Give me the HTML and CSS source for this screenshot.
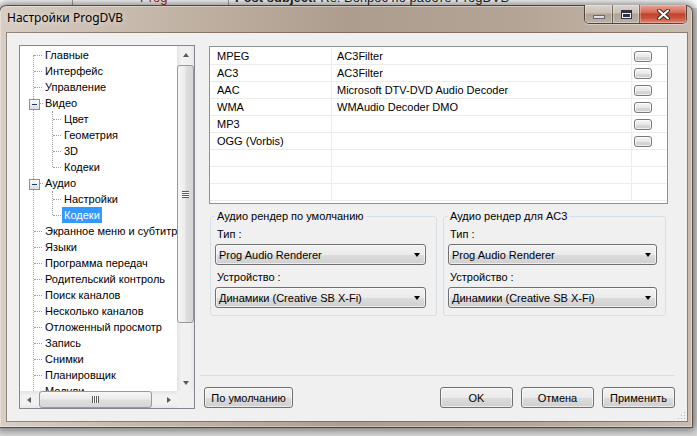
FILE: index.html
```html
<!DOCTYPE html>
<html lang="ru">
<head>
    <meta charset="UTF-8">
    <title>Настройки ProgDVB</title>
    <link rel="stylesheet" href="styles.css">
</head>
<body>
<div class="desk">
    <div class="page-strip">
        <span class="bg-prog">Prog</span>
        <span class="bg-subject"><b>Post subject:</b> Re: Вопрос по работе ProgDVB</span>
    </div>

    <div class="window">
        <div class="titlebar">
            <span class="title">Настройки ProgDVB</span>
            <div class="caption-btns">
                <span class="cap cap-min"><i></i></span>
                <span class="cap cap-max"><i></i></span>
                <span class="cap cap-close">
                    <svg width="13" height="11" viewBox="0 0 13 11">
                        <path d="M2 1.5 L11 9.5 M11 1.5 L2 9.5" stroke="#3a2a28" stroke-width="4" stroke-linecap="round"/>
                        <path d="M2 1.5 L11 9.5 M11 1.5 L2 9.5" stroke="#fff" stroke-width="2" stroke-linecap="round"/>
                    </svg>
                </span>
            </div>
        </div>

        <div class="client">
            <!-- дерево разделов -->
            <div class="tree">
                <div class="tree-items">
                    <div class="node"><span>Главные</span></div>
                    <div class="node"><span>Интерфейс</span></div>
                    <div class="node"><span>Управление</span></div>
                    <div class="node open"><span>Видео</span></div>
                    <div class="children">
                        <div class="node child"><span>Цвет</span></div>
                        <div class="node child"><span>Геометрия</span></div>
                        <div class="node child"><span>3D</span></div>
                        <div class="node child"><span>Кодеки</span></div>
                    </div>
                    <div class="node open"><span>Аудио</span></div>
                    <div class="children">
                        <div class="node child"><span>Настройки</span></div>
                        <div class="node child selected"><span>Кодеки</span></div>
                    </div>
                    <div class="node"><span>Экранное меню и субтитры</span></div>
                    <div class="node"><span>Языки</span></div>
                    <div class="node"><span>Программа передач</span></div>
                    <div class="node"><span>Родительский контроль</span></div>
                    <div class="node"><span>Поиск каналов</span></div>
                    <div class="node"><span>Несколько каналов</span></div>
                    <div class="node"><span>Отложенный просмотр</span></div>
                    <div class="node"><span>Запись</span></div>
                    <div class="node"><span>Снимки</span></div>
                    <div class="node"><span>Планировщик</span></div>
                    <div class="node"><span>Модули</span></div>
                </div>
                <div class="vscroll">
                    <span class="arrow"><i class="tri-up"></i></span>
                    <span class="thumb vthumb"><i class="grip-h"></i></span>
                    <span class="arrow arrow-end"><i class="tri-down"></i></span>
                </div>
                <div class="hscroll">
                    <span class="arrow"><i class="tri-left"></i></span>
                    <span class="thumb hthumb"><i class="grip-v"></i></span>
                    <span class="arrow arrow-end"><i class="tri-right"></i></span>
                </div>
                <div class="corner"></div>
            </div>

            <div class="main">
                <div class="codecs">
                    <div class="row"><span>MPEG</span><span>AC3Filter</span><span><i class="mini-btn"></i></span></div>
                    <div class="row"><span>AC3</span><span>AC3Filter</span><span><i class="mini-btn"></i></span></div>
                    <div class="row"><span>AAC</span><span>Microsoft DTV-DVD Audio Decoder</span><span><i class="mini-btn"></i></span></div>
                    <div class="row"><span>WMA</span><span>WMAudio Decoder DMO</span><span><i class="mini-btn"></i></span></div>
                    <div class="row"><span>MP3</span><span></span><span><i class="mini-btn"></i></span></div>
                    <div class="row"><span>OGG (Vorbis)</span><span></span><span><i class="mini-btn"></i></span></div>
                    <div class="row"><span></span><span></span><span></span></div>
                    <div class="row"><span></span><span></span><span></span></div>
                    <div class="row"><span></span><span></span><span></span></div>
                </div>

                <div class="groups">
                    <fieldset class="group group-default">
                        <legend>Аудио рендер по умолчанию</legend>
                        <div class="field-label">Тип :</div>
                        <div class="combo"><span>Prog Audio Renderer</span><i class="tri-down"></i></div>
                        <div class="field-label second">Устройство :</div>
                        <div class="combo"><span>Динамики (Creative SB X-Fi)</span><i class="tri-down"></i></div>
                    </fieldset>
                    <fieldset class="group group-ac3">
                        <legend>Аудио рендер для AC3</legend>
                        <div class="field-label">Тип :</div>
                        <div class="combo"><span>Prog Audio Renderer</span><i class="tri-down"></i></div>
                        <div class="field-label second">Устройство :</div>
                        <div class="combo"><span>Динамики (Creative SB X-Fi)</span><i class="tri-down"></i></div>
                    </fieldset>
                </div>

                <div class="separator"></div>

                <div class="buttons">
                    <button class="btn btn-defaults">По умолчанию</button>
                    <span class="spacer"></span>
                    <button class="btn">OK</button>
                    <button class="btn">Отмена</button>
                    <button class="btn">Применить</button>
                </div>
            </div>

            <svg class="size-grip" width="9" height="9" viewBox="0 0 9 9">
                <rect x="7" y="1" width="1" height="1" fill="#b8b8b8"/>
                <rect x="4" y="4" width="1" height="1" fill="#b8b8b8"/>
                <rect x="7" y="4" width="1" height="1" fill="#b8b8b8"/>
                <rect x="1" y="7" width="1" height="1" fill="#b8b8b8"/>
                <rect x="4" y="7" width="1" height="1" fill="#b8b8b8"/>
                <rect x="7" y="7" width="1" height="1" fill="#b8b8b8"/>
            </svg>
        </div>
    </div>
</div>
</body>
</html>
```

FILE: styles.css
```css
* {
    box-sizing: border-box;
}
body {
    margin: 0;
    font-family: "Liberation Sans", Arial, sans-serif;
    font-size: 11px;
    color: #000;
    background: #d6d6d6;
}
.desk {
    position: relative;
    width: 697px;
    height: 436px;
    overflow: hidden;
    background: #d9d9d9;
}

/* кусок страницы форума за окном */
.page-strip {
    position: absolute;
    left: 0;
    top: 0;
    width: 697px;
    height: 8px;
    overflow: hidden;
    background: linear-gradient(90deg, #fff 72px, #a8a8a8 72px 73px, #fff 73px 228px, #a8a8a8 228px 229px, #fff 229px);
}
.bg-prog,
.bg-subject {
    position: absolute;
    top: -10px;
    font-size: 13px;
    white-space: nowrap;
}
.bg-prog {
    left: 140px;
    color: #b01c1c;
}
.bg-subject {
    left: 235px;
    color: #222;
}

/* окно */
.window {
    position: absolute;
    left: -1px;
    top: 5px;
    width: 694px;
    height: 423px;
    padding: 0 5px 6px 7px;
    border: 1px solid rgba(50, 35, 25, 0.75);
    border-radius: 7px 7px 0 0;
    background: linear-gradient(90deg, #d8cec4 0%, #c6b8aa 20%, #ad9d8e 50%, #b4a495 75%, #c8bcb1 100%);
    box-shadow: 0 0 8px 2px rgba(0, 0, 0, 0.5), inset 0 0 0 1px rgba(255, 255, 255, 0.35);
}
.titlebar {
    display: flex;
    height: 27px;
}
.title {
    padding-top: 4px;
    font-family: "Noto Sans", "Open Sans", sans-serif;
    font-size: 12px;
    line-height: 16px;
    color: #000;
    text-shadow: 0 0 6px rgba(255, 255, 255, 0.7);
}
.caption-btns {
    display: flex;
    height: 19px;
    margin-left: auto;
    margin-top: -1px;
    border: 1px solid rgba(45, 35, 30, 0.75);
    border-top: 0;
    border-radius: 0 0 5px 5px;
    overflow: hidden;
    box-shadow: 0 1px 0 rgba(255, 255, 255, 0.35);
}
.cap {
    display: flex;
    align-items: center;
    justify-content: center;
    height: 100%;
    border-right: 1px solid rgba(45, 35, 30, 0.55);
}
.cap-min,
.cap-max {
    background: linear-gradient(#dcd4cc 0%, #c9beb3 45%, #b0a295 50%, #bdb1a6 100%);
    box-shadow: inset 0 0 0 1px rgba(255, 255, 255, 0.3);
}
.cap-min {
    width: 28px;
}
.cap-max {
    width: 27px;
}
.cap-close {
    width: 46px;
    border-right: 0;
    background: linear-gradient(#eaa595 0%, #d46a55 42%, #c0412a 50%, #c9533c 72%, #e08a74 100%);
    box-shadow: inset 0 0 0 1px rgba(255, 220, 210, 0.35);
}
.cap-min i {
    width: 12px;
    height: 4px;
    margin-top: 5px;
    border: 1px solid #6a6670;
    background: #e0e0e4;
}
.cap-max i {
    width: 11px;
    height: 9px;
    border: 1px solid #2e3245;
    border-top-width: 3px;
    background: #2e3245;
    box-shadow: inset 0 0 0 1px #f4f4f8;
}

.client {
    position: relative;
    display: grid;
    grid-template-columns: 176px 476px;
    column-gap: 5px;
    height: 388px;
    padding: 12px 11px 0 12px;
    background: #f0f0f0;
    box-shadow: 0 0 0 1px rgba(80, 62, 48, 0.5);
}
.size-grip {
    position: absolute;
    right: 1px;
    bottom: 1px;
}

/* дерево */
.tree {
    display: grid;
    grid-template-columns: 157px 17px;
    grid-template-rows: 345px 17px;
    height: 364px;
    border: 1px solid #828790;
    background: #fff;
}
.tree-items {
    position: relative;
    padding-top: 1px;
    overflow: hidden;
    white-space: nowrap;
}
.tree-items::before {
    content: "";
    position: absolute;
    left: 13px;
    top: 9px;
    bottom: 0;
    border-left: 1px dotted #a0a0a0;
}
.node {
    position: relative;
    height: 16px;
    line-height: 16px;
    padding-left: 25px;
}
.node::before {
    content: "";
    position: absolute;
    left: 14px;
    top: 8px;
    width: 8px;
    border-top: 1px dotted #a0a0a0;
}
.node.open::before {
    left: 18px;
    width: 5px;
}
.node.open::after {
    content: "";
    position: absolute;
    left: 9px;
    top: 4px;
    width: 9px;
    height: 9px;
    border: 1px solid #919191;
    background: linear-gradient(#1e3f73, #1e3f73) center / 5px 1px no-repeat, linear-gradient(#fff, #dcdcdc);
}
.children {
    position: relative;
}
.children::before {
    content: "";
    position: absolute;
    left: 32px;
    top: 0;
    bottom: 8px;
    border-left: 1px dotted #a0a0a0;
}
.node.child {
    padding-left: 44px;
}
.node.child::before {
    left: 33px;
}
.node span {
    display: inline-block;
    height: 16px;
}
.node.selected span {
    margin-left: -2px;
    padding: 0 2px;
    background: #3399ff;
    color: #fff;
}

/* полосы прокрутки */
.vscroll,
.hscroll {
    display: flex;
}
.vscroll {
    flex-direction: column;
    background: linear-gradient(90deg, #e3e3e3, #f1f1f1 25%, #f1f1f1 75%, #e6e6e6);
}
.hscroll {
    background: linear-gradient(#e3e3e3, #f1f1f1 25%, #f1f1f1 75%, #e6e6e6);
}
.corner {
    background: #f0f0f0;
}
.arrow {
    display: flex;
    align-items: center;
    justify-content: center;
    width: 17px;
    height: 17px;
    flex: none;
}
.arrow-end {
    margin-top: auto;
    margin-left: auto;
}
.vscroll .arrow-end {
    margin-left: 0;
}
.hscroll .arrow-end {
    margin-top: 0;
}
.tri-up,
.tri-down {
    width: 0;
    height: 0;
    border-left: 3.5px solid transparent;
    border-right: 3.5px solid transparent;
}
.tri-up {
    border-bottom: 4px solid #5a5a5a;
}
.tri-down {
    border-top: 4px solid #5a5a5a;
}
.tri-left,
.tri-right {
    width: 0;
    height: 0;
    border-top: 3.5px solid transparent;
    border-bottom: 3.5px solid transparent;
}
.tri-left {
    border-right: 4px solid #5a5a5a;
}
.tri-right {
    border-left: 4px solid #5a5a5a;
}
.thumb {
    display: flex;
    align-items: center;
    justify-content: center;
    border: 1px solid #999;
    border-radius: 3px;
    flex: none;
}
.vthumb {
    height: 258px;
    margin-top: 2px;
    background: linear-gradient(90deg, #f6f6f6, #ececec 45%, #dedede 55%, #d6d6d6);
}
.hthumb {
    width: 113px;
    margin-left: 2px;
    background: linear-gradient(#f6f6f6, #ececec 45%, #dedede 55%, #d6d6d6);
}
.grip-h {
    width: 7px;
    height: 7px;
    background: repeating-linear-gradient(#5f5f5f 0 1px, #fafafa 1px 2px);
}
.grip-v {
    width: 7px;
    height: 7px;
    background: repeating-linear-gradient(90deg, #5f5f5f 0 1px, #fafafa 1px 2px);
}

/* правая часть */
.main {
    display: flex;
    flex-direction: column;
}
.codecs {
    width: 459px;
    height: 158px;
    margin: 1px 0 0 9px;
    padding-top: 1px;
    border: 1px solid #8e9196;
    background: #fff;
    overflow: hidden;
}
.row {
    display: grid;
    grid-template-columns: 122px 300px 1fr;
    height: 17px;
    border-bottom: 1px solid #ececec;
    line-height: 16px;
}
.row span {
    display: flex;
    align-items: center;
    white-space: nowrap;
}
.row span:nth-child(1) {
    padding-left: 7px;
    border-right: 1px solid #ececec;
}
.row span:nth-child(2) {
    padding-left: 5px;
    border-right: 1px solid #ececec;
}
.row span:nth-child(3) {
    padding-left: 2px;
}
.mini-btn {
    width: 18px;
    height: 11px;
    border: 1px solid #7a7a7a;
    border-radius: 3px;
    background: linear-gradient(#f6f6f6, #e8e8e8 50%, #d9d9d9 51%, #cdcdcd);
    box-shadow: inset 0 0 0 1px rgba(255, 255, 255, 0.7);
}

.groups {
    display: flex;
    gap: 6px;
    margin: 6px 0 0 10px;
}
.group {
    margin: 0;
    padding: 0 10px 7px 4px;
    border: 1px solid #d5dfe5;
    border-radius: 3px;
    min-width: 0;
}
.group-default {
    width: 227px;
}
.group-ac3 {
    width: 223px;
    padding-right: 8px;
}
.group legend {
    padding: 0 2px;
    line-height: 13px;
}
.field-label {
    margin-top: 5px;
    padding-left: 2px;
    line-height: 13px;
}
.field-label.second {
    margin-top: 6px;
}
.combo {
    display: flex;
    align-items: center;
    height: 21px;
    margin-top: 3px;
    padding: 0 5px 0 3px;
    border: 1px solid #707070;
    border-radius: 3px;
    background: linear-gradient(#f2f2f2 0%, #ebebeb 50%, #dddddd 51%, #cfcfcf 100%);
    box-shadow: inset 0 0 0 1px rgba(255, 255, 255, 0.6);
}
.combo span {
    flex: 1;
    white-space: nowrap;
}
.combo .tri-down {
    border-top-color: #000;
}

.separator {
    width: 475px;
    margin-top: 59px;
    border-top: 1px solid #d8dee4;
}
.buttons {
    display: flex;
    gap: 8px;
    margin: 11px 1px 0 4px;
}
.spacer {
    flex: 1;
}
.btn {
    width: 73px;
    height: 21px;
    padding: 0;
    border: 1px solid #707070;
    border-radius: 3px;
    background: linear-gradient(#f2f2f2 0%, #ebebeb 50%, #dddddd 51%, #cfcfcf 100%);
    box-shadow: inset 0 0 0 1px rgba(255, 255, 255, 0.6);
    font-family: inherit;
    font-size: 11px;
    color: #000;
}
.btn-defaults {
    width: 89px;
}
```
